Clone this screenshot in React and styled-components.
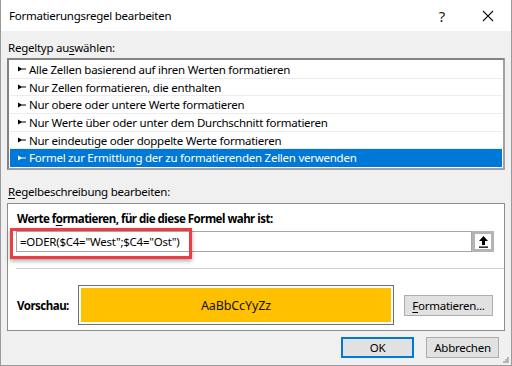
import React from "react";
import styled, { createGlobalStyle } from "styled-components";

const Global = createGlobalStyle`
  html, body { margin: 0; padding: 0; background: #fff; }
  body { font-family: "Noto Sans", "Segoe UI", sans-serif; font-size: 12px; color: #000; }
  * { box-sizing: border-box; }
`;

const Window = styled.div`
  width: 512px;
  height: 366px;
  display: flex;
  flex-direction: column;
  border: 1px solid #9a9a9a;
  border-top: none;
  background: #f0f0f0;
  position: relative;
  font-family: "Noto Sans", sans-serif;
  font-size: 11.5px;
  letter-spacing: -0.25px;
`;

const TitleBar = styled.div`
  height: 31px;
  background: #fff;
  display: flex;
  align-items: center;
  padding-left: 8px;
  flex-shrink: 0;
`;

const Title = styled.div`
  flex: 1;
  color: #000;
`;

const TitleBtn = styled.div`
  width: 46px;
  height: 31px;
  display: flex;
  align-items: center;
  justify-content: center;
  font-size: 15px;
  color: #222;
`;

const Body = styled.div`
  display: flex;
  flex-direction: column;
  padding: 8px 6px 0 6px;
  flex: 1;
`;

const Label = styled.div`
  height: 18px;
  line-height: 18px;
  padding-left: 1px;
  margin-bottom: ${(p) => p.$mb || 0}px;
  u { text-decoration: underline; text-underline-offset: 2px; }
`;

const ListBox = styled.div`
  width: 498px;
  height: 112px;
  background: #fff;
  border: 2px solid #828282;
  border-right-color: #a0a0a0;
  border-bottom-color: #a0a0a0;
  padding: 1px 1px;
  display: flex;
  flex-direction: column;
`;

const Row = styled.div`
  height: 18px;
  display: flex;
  align-items: center;
  gap: 3px;
  padding-left: 8px;
  border-bottom: 1px solid ${(p) => (p.$last ? "transparent" : "#ececec")};
  background: ${(p) => (p.$selected ? "#0078d7" : "transparent")};
  color: ${(p) => (p.$selected ? "#fff" : "#000")};
  white-space: nowrap;
`;

const PanelLabelWrap = styled.div`
  margin-top: 13px;
  margin-bottom: 2px;
`;

const Panel = styled.div`
  width: 498px;
  height: 128px;
  background: #fff;
  border: 1px solid #8c8c8c;
  display: flex;
  flex-direction: column;
  padding: 6px 0 0 9px;
  position: relative;
`;

const BoldLabel = styled.div`
  font-weight: 700;
  height: 18px;
  line-height: 18px;
  letter-spacing: -0.5px;
  u { text-decoration: underline; text-underline-offset: 2px; }
`;

const InputRow = styled.div`
  display: flex;
  margin-top: 3px;
  margin-left: -1px;
  height: 21px;
`;

const Input = styled.div`
  width: 456px;
  height: 21px;
  border: 1px solid #a6a6a6;
  display: flex;
  align-items: center;
  padding-left: 3px;
  white-space: nowrap;
`;

const RefBtn = styled.div`
  width: 22px;
  height: 21px;
  border: 3px solid #b4b4b4;
  background: #fff;
  display: flex;
  align-items: center;
  justify-content: center;
`;

const Highlight = styled.div`
  position: absolute;
  left: 2px;
  top: 24px;
  width: 182px;
  height: 31px;
  border: 3px solid #ec3d44;
  box-shadow: 0 2px 4px rgba(0, 0, 0, 0.35);
  pointer-events: none;
`;

const Separator = styled.div`
  height: 1px;
  background: #d2d2d2;
  margin-top: 16px;
  margin-left: -1px;
`;

const PreviewRow = styled.div`
  display: flex;
  align-items: center;
  margin-top: 16px;
`;

const PreviewLabel = styled.div`
  font-weight: 700;
  width: 61px;
  letter-spacing: -0.5px;
`;

const PreviewBox = styled.div`
  width: 316px;
  height: 40px;
  border: 1px solid #6e6e6e;
  padding: 2px;
  background: #fff;
`;

const PreviewFill = styled.div`
  width: 100%;
  height: 100%;
  background: #ffc000;
  display: flex;
  align-items: center;
  justify-content: center;
  font-size: 12.5px;
  color: #111;
  letter-spacing: -0.1px;
`;

const Button = styled.div`
  width: ${(p) => p.$w || 73}px;
  height: 21px;
  background: #e1e1e1;
  border: ${(p) => (p.$default ? "2px solid #0078d7" : "1px solid #adadad")};
  display: flex;
  align-items: center;
  justify-content: center;
  margin-left: ${(p) => p.$ml || 0}px;
  u { text-decoration: underline; text-underline-offset: 2px; }
`;

const Footer = styled.div`
  display: flex;
  justify-content: flex-end;
  padding-right: 6px;
  margin-top: 6px;
`;

const Grip = styled.svg`
  position: absolute;
  right: 2px;
  bottom: 2px;
`;

function Arrow({ color }) {
  return (
    <svg width="8" height="6" viewBox="0 0 8 6">
      <path d="M0 0.5 L0 5.5 L3.5 3.5 L8 3.5 L8 2.5 L3.5 2.5 Z" fill={color} />
    </svg>
  );
}

const rows = [
  "Alle Zellen basierend auf ihren Werten formatieren",
  "Nur Zellen formatieren, die enthalten",
  "Nur obere oder untere Werte formatieren",
  "Nur Werte über oder unter dem Durchschnitt formatieren",
  "Nur eindeutige oder doppelte Werte formatieren",
  "Formel zur Ermittlung der zu formatierenden Zellen verwenden",
];

export default function App() {
  return (
    <>
      <Global />
      <Window>
        <TitleBar>
          <Title>Formatierungsregel bearbeiten</Title>
          <TitleBtn>?</TitleBtn>
          <TitleBtn>
            <svg width="12" height="12" viewBox="0 0 12 12">
              <path d="M1 1 L11 11 M11 1 L1 11" stroke="#111" strokeWidth="1.1" />
            </svg>
          </TitleBtn>
        </TitleBar>
        <Body>
          <Label $mb={1}>
            Regeltyp au<u>s</u>wählen:
          </Label>
          <ListBox>
            {rows.map((r, i) => (
              <Row key={i} $selected={i === 5} $last={i === 5}>
                <Arrow color={i === 5 ? "#fff" : "#000"} />
                {r}
              </Row>
            ))}
          </ListBox>
          <PanelLabelWrap>
            <Label>
              <u>R</u>egelbeschreibung bearbeiten:
            </Label>
          </PanelLabelWrap>
          <Panel>
            <BoldLabel>
              Werte f<u>o</u>rmatieren, für die diese Formel wahr ist:
            </BoldLabel>
            <InputRow>
              <Input>=ODER($C4="West";$C4="Ost")</Input>
              <RefBtn>
                <svg width="11" height="13" viewBox="0 0 11 13">
                  <path d="M5.5 1 L10 6 L7 6 L7 10 L4 10 L4 6 L1 6 Z" fill="#000" />
                  <rect x="1" y="11.5" width="9" height="1.3" fill="#000" />
                </svg>
              </RefBtn>
            </InputRow>
            <Highlight />
            <Separator />
            <PreviewRow>
              <PreviewLabel>Vorschau:</PreviewLabel>
              <PreviewBox>
                <PreviewFill>AaBbCcYyZz</PreviewFill>
              </PreviewBox>
              <Button $w={89} $ml={10}>
                <u>F</u>ormatieren...
              </Button>
            </PreviewRow>
          </Panel>
          <Footer>
            <Button $default>OK</Button>
            <Button $ml={12}>Abbrechen</Button>
          </Footer>
        </Body>
        <Grip width="6" height="6" viewBox="0 0 6 6">
          <rect x="4" y="0" width="2" height="2" fill="#b8b8b8" />
          <rect x="2" y="2" width="2" height="2" fill="#b8b8b8" />
          <rect x="4" y="2" width="2" height="2" fill="#b8b8b8" />
          <rect x="0" y="4" width="2" height="2" fill="#b8b8b8" />
          <rect x="2" y="4" width="2" height="2" fill="#b8b8b8" />
          <rect x="4" y="4" width="2" height="2" fill="#b8b8b8" />
        </Grip>
      </Window>
    </>
  );
}
